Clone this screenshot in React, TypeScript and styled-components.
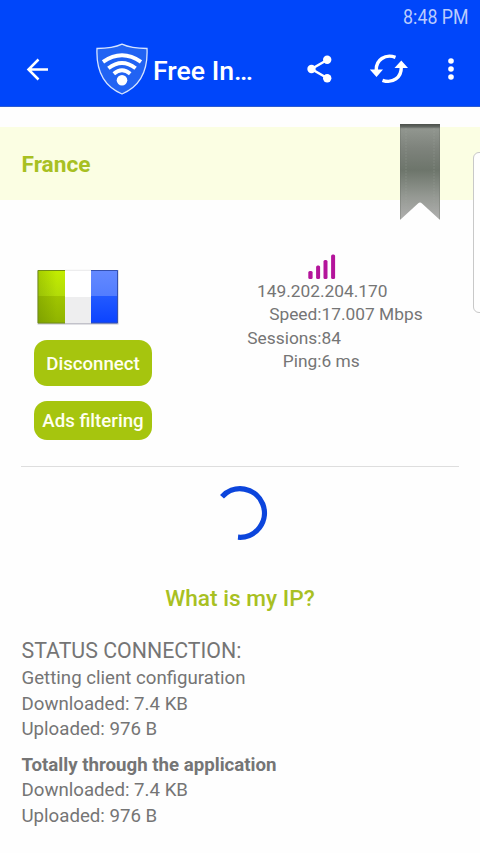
import React from 'react';
import styled, { createGlobalStyle } from 'styled-components';

const GlobalStyle = createGlobalStyle`
  * { box-sizing: border-box; }
  body { margin: 0; background: #fefefe; overflow: hidden; }
`;

const Screen = styled.div`
  position: relative;
  width: 480px;
  height: 853px;
  overflow: hidden;
  background: #fefefe;
  color: #757575;
  font-family: Roboto, sans-serif;
  white-space: nowrap;
`;

const Header = styled.header`
  height: 107px;
  background: #0046fa;
  border-bottom: 1px solid #2c5cd0;
`;

const StatusBar = styled.div`
  height: 32px;
  display: flex;
  justify-content: flex-end;
  padding-right: 11px;
  color: #bacbfd;
  font-size: 20px;
  line-height: 34px;
`;

const Clock = styled.span`
  transform: scaleX(0.89);
  transform-origin: right center;
`;

const Toolbar = styled.div`
  height: 74px;
  display: flex;
  align-items: center;
  color: #fff;
`;

const Icon = styled.svg<{ $left?: number }>`
  display: block;
  flex: none;
  margin-left: ${(p) => p.$left ?? 0}px;
`;

const Title = styled.h1`
  width: 106px;
  margin: 3px 0 0 5px;
  font-size: 26.67px;
  line-height: 34px;
  font-weight: 500;
`;

const CountryBand = styled.section`
  display: flex;
  justify-content: space-between;
  height: 73px;
  margin-top: 20px;
  padding: 0 40px 0 21.5px;
  background: #fbfee3;
`;

const Country = styled.h2`
  margin: 0;
  color: #a8c022;
  font-size: 22.67px;
  line-height: 75px;
  font-weight: 700;
`;

const Ribbon = styled.svg`
  display: block;
  margin-top: -3px;
  overflow: visible;
`;

const Server = styled.section`
  display: flex;
  height: 267px;
  margin: 0 21px;
  border-bottom: 1px solid #dedede;
`;

const Actions = styled.div`
  width: 144px;
  padding: 69px 0 0 13px;
`;

const Button = styled.button<{ $height: number; $gap: number }>`
  display: block;
  width: 118px;
  height: ${(p) => p.$height}px;
  margin: ${(p) => p.$gap}px 0 0;
  padding: 1px 0 0;
  border: 0;
  border-radius: 13px;
  background: #a6c50e;
  color: #fffff0;
  font: 500 18.67px Roboto, sans-serif;
`;

const Details = styled.div`
  flex: 1;
  display: flex;
  flex-direction: column;
  padding: 54px 0 0 0;
`;

const Signal = styled.svg`
  display: block;
  margin-left: 142px;
`;

const Address = styled.div`
  padding-left: 92px;
  font-size: 17.33px;
  line-height: 23.4px;
`;

const Metrics = styled.dl`
  display: grid;
  grid-template-columns: 156.5px 1fr;
  margin: 0;
  font-size: 17.33px;
  line-height: 23.3px;
`;

const Label = styled.dt`
  text-align: right;
`;

const Value = styled.dd`
  margin: 0;
`;

const Loader = styled.div`
  display: flex;
  justify-content: center;
  padding-top: 18px;
`;

const IpLink = styled.a`
  display: block;
  margin-top: 42px;
  text-align: center;
  color: #a8c022;
  font-size: 22.67px;
  line-height: 32px;
  font-weight: 500;
`;

const Traffic = styled.section<{ $top: number }>`
  margin-top: ${(p) => p.$top}px;
  padding-left: 21.5px;
`;

const Heading = styled.h3`
  margin: 0 0 1px;
  font-size: 21.33px;
  line-height: 28px;
  font-weight: 400;
`;

const Line = styled.p<{ $bold?: boolean }>`
  margin: 0;
  font-size: 18.67px;
  line-height: 25.3px;
  font-weight: ${(p) => (p.$bold ? 700 : 400)};
`;

const EdgePanel = styled.div`
  position: absolute;
  left: 473px;
  top: 152px;
  width: 14px;
  height: 161px;
  border: 1px solid #c8c8c8;
  border-radius: 6px;
  background: #fefefe;
`;

const metrics = [
  ['Speed:', '17.007 Mbps'],
  ['Sessions:', '84'],
  ['Ping:', '6 ms'],
];

const Flag = () => (
  <Icon width="82" height="56" viewBox="0 0 82 56" $left={2.5}>
    <defs>
      <linearGradient id="green" x1="0" y1="0" x2="0" y2="1">
        <stop offset="0" stopColor="#c3ed00" />
        <stop offset=".49" stopColor="#b2db08" />
        <stop offset=".5" stopColor="#a0c500" />
        <stop offset="1" stopColor="#90b400" />
      </linearGradient>
      <linearGradient id="shade">
        <stop offset="0" stopColor="#406000" stopOpacity=".22" />
        <stop offset=".7" stopColor="#406000" stopOpacity="0" />
      </linearGradient>
      <linearGradient id="blue" x1="0" y1="0" x2="0" y2="1">
        <stop offset="0" stopColor="#6489ff" />
        <stop offset=".49" stopColor="#527dff" />
        <stop offset=".5" stopColor="#2259ff" />
        <stop offset="1" stopColor="#0b43ff" />
      </linearGradient>
    </defs>
    <rect x="0.500" y="1" width="81" height="54.500" fill="#c2c2ca" />
    <rect x="1" y="1" width="27" height="53" fill="url(#green)" />
    <rect x="1" y="1" width="27" height="53" fill="url(#shade)" />
    <rect x="28" y="1" width="26" height="27" fill="#fff" />
    <rect x="28" y="28" width="26" height="26" fill="#eeeeef" />
    <rect x="54" y="1" width="27" height="53" fill="url(#blue)" />
    <path d="M28 1.5H1V54H28" fill="none" stroke="#718d15" />
    <path d="M28 1.300H54" stroke="#d8d8dc" strokeWidth=".6" />
    <path d="M54 1.5H80.500V54H54" fill="none" stroke="#3450b0" />
  </Icon>
);

export default function App() {
  return (
    <Screen>
      <GlobalStyle />
      <Header>
        <StatusBar>
          <Clock>8:48 PM</Clock>
        </StatusBar>
        <Toolbar>
          <Icon $left={26} width="24" height="24" viewBox="0 0 24 24" fill="none" stroke="currentColor" strokeWidth="2.5">
            <path d="M22 12.500H2.500M12.500 2.500l-10 10 10 10" />
          </Icon>
          <Icon $left={46} width="52" height="52" viewBox="0 0 52 52">
            <path
              d="M26 1.200C19 4.500 10 5.500 1 5.500C0 27 7 43 26 51C45 43 52 27 51 5.500C42 5.500 33 4.500 26 1.200Z"
              fill="#2163f3"
              stroke="#d6e4ff"
              strokeWidth="1.300"
            />
            <g fill="none" stroke="#fff" strokeWidth="3.900">
              <path d="M7 18.800Q26 5.600 45 18.800" />
              <path d="M12.400 25.200Q26 14.600 39.600 25.200" />
              <path d="M17.800 30.700Q26 23.800 34.200 30.700" />
            </g>
            <circle cx="26" cy="37.200" r="5.300" fill="#fff" />
          </Icon>
          <Title>Free In…</Title>
          <Icon $left={47} width="28" height="28" viewBox="0 0 28 28">
            <path d="M21 5L5.500 14l15.500 9" fill="none" stroke="#fff" strokeWidth="2.500" />
            <g fill="#fff">
              <circle cx="21.200" cy="4.700" r="4.200" />
              <circle cx="5.500" cy="14" r="4.200" />
              <circle cx="21.200" cy="23.300" r="4.200" />
            </g>
          </Icon>
          <Icon $left={35} width="40" height="32" viewBox="0 0 40 32">
            <g fill="none" stroke="#fff" strokeWidth="3.400">
              <path d="M26.500 4.300C16 .5 7 7 7.300 17" />
              <path d="M13.500 27.300C24 31 32.500 24.500 32.300 14" />
            </g>
            <path d="M.8 16.500H14l-6.500 7.500zM25.500 15H39l-6.700-7.500z" fill="#fff" />
          </Icon>
          <Icon $left={37.5} width="8" height="24" viewBox="0 0 8 24" fill="#fff">
            <circle cx="4" cy="4" r="2.800" />
            <circle cx="4" cy="12" r="2.800" />
            <circle cx="4" cy="20" r="2.800" />
          </Icon>
        </Toolbar>
      </Header>

      <CountryBand>
        <Country>France</Country>
        <Ribbon width="40" height="97" viewBox="0 0 40 97">
          <defs>
            <linearGradient id="ribbon" x1="0" y1="0" x2="0" y2="1">
              <stop offset="0" stopColor="#4b504a" />
              <stop offset=".03" stopColor="#626762" />
              <stop offset=".05" stopColor="#91968f" />
              <stop offset=".25" stopColor="#7e837c" />
              <stop offset=".48" stopColor="#6d756b" />
              <stop offset=".75" stopColor="#949892" />
              <stop offset="1" stopColor="#b0b0af" />
            </linearGradient>
          </defs>
          <path d="M0 0H40V96L22 79.500Q20 77.500 18 79.500L0 96Z" fill="url(#ribbon)" />
          <path d="M.5 3V95M39.500 3V95" stroke="#666d64" strokeOpacity=".35" />
          <path d="M6 4V88M34 4V88" stroke="#adb2aa" strokeOpacity=".25" strokeDasharray="2 1" />
        </Ribbon>
      </CountryBand>

      <Server>
        <Actions>
          <Flag />
          <Button $height={46} $gap={15}>Disconnect</Button>
          <Button $height={39} $gap={15}>Ads filtering</Button>
        </Actions>
        <Details>
          <Signal width="30" height="26" viewBox="0 0 30 26" fill="#b4149b">
            <rect x="1.300" y="17" width="4.300" height="8" rx="1.500" />
            <rect x="9.100" y="11.500" width="4" height="13.500" rx="1.500" />
            <rect x="16.500" y="6" width="4" height="19" rx="1.500" />
            <rect x="24.100" y=".5" width="4" height="24.500" rx="1.500" />
          </Signal>
          <Address>149.202.204.170</Address>
          <Metrics>
            {metrics.map(([label, value]) => (
              <React.Fragment key={label}>
                <Label>{label}</Label>
                <Value>{value}</Value>
              </React.Fragment>
            ))}
          </Metrics>
        </Details>
      </Server>

      <Loader>
        <svg width="56" height="56" viewBox="0 0 56 56">
          <path d="M10 11.800A24.300 24.300 0 1 1 26 52.200" fill="none" stroke="#0c45dc" strokeWidth="5.300" />
        </svg>
      </Loader>
      <IpLink>What is my IP?</IpLink>

      <Traffic $top={22.3}>
        <Heading>STATUS CONNECTION:</Heading>
        <Line>Getting client configuration</Line>
        <Line>Downloaded: 7.4 KB</Line>
        <Line>Uploaded: 976 B</Line>
      </Traffic>
      <Traffic $top={11}>
        <Line $bold>Totally through the application</Line>
        <Line>Downloaded: 7.4 KB</Line>
        <Line>Uploaded: 976 B</Line>
      </Traffic>
      <EdgePanel />
    </Screen>
  );
}
